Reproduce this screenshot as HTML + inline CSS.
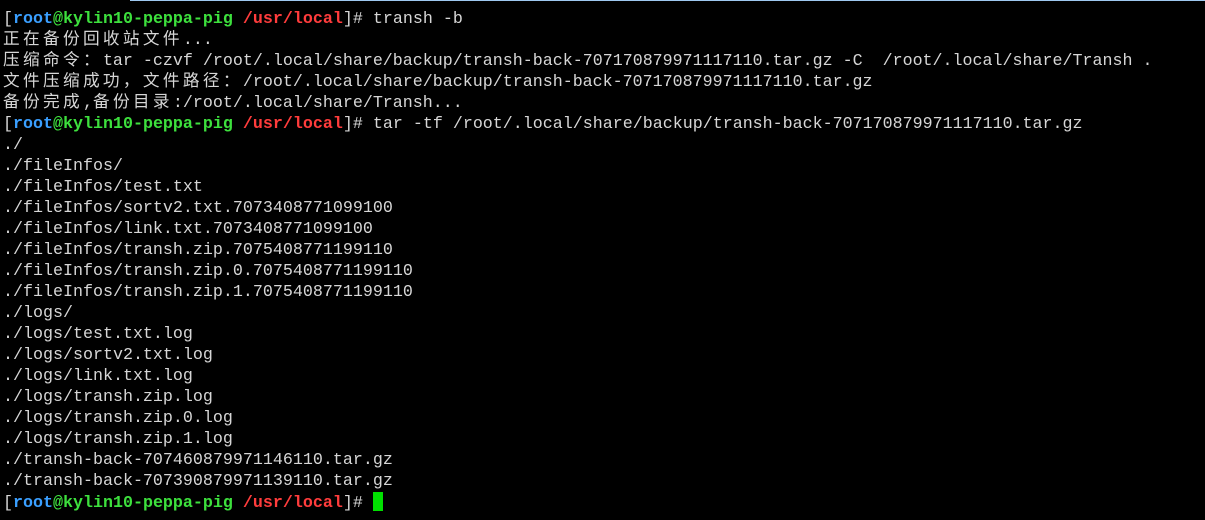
<!DOCTYPE html>
<html><head><meta charset="utf-8"><style>
html,body{margin:0;padding:0;background:#000;width:1205px;height:520px;overflow:hidden}
#t{position:absolute;left:3px;top:9px;font-family:"Liberation Mono",monospace;font-size:16.67px;color:#d6d6d6}
#t div{height:21px;line-height:21px;overflow:visible;white-space:pre}
.c{letter-spacing:3.33px;font-family:"Noto Sans CJK SC",sans-serif;line-height:1px}
.b{color:#3a9fff;font-weight:bold}.g{color:#3de03d;font-weight:bold}.r{color:#ff3c3c;font-weight:bold}
.cur{display:inline-block;width:10px;height:19px;background:#00e000;vertical-align:-4px}
#bar{position:absolute;left:130px;top:0;width:1075px;height:1px;background:#9ec8f0}
</style></head><body><div id="bar"></div>
<div id="t"><div>[<span class="b">root</span><span class="g">@kylin10-peppa-pig</span> <span class="r">/usr/local</span>]# transh -b</div><div><span class="c">正在备份回收站文件</span>...</div><div><span class="c">压缩命令：</span>tar -czvf /root/.local/share/backup/transh-back-707170879971117110.tar.gz -C  /root/.local/share/Transh .</div><div><span class="c">文件压缩成功，文件路径：</span>/root/.local/share/backup/transh-back-707170879971117110.tar.gz</div><div><span class="c">备份完成</span>,<span class="c">备份目录</span>:/root/.local/share/Transh...</div><div>[<span class="b">root</span><span class="g">@kylin10-peppa-pig</span> <span class="r">/usr/local</span>]# tar -tf /root/.local/share/backup/transh-back-707170879971117110.tar.gz</div><div>./</div><div>./fileInfos/</div><div>./fileInfos/test.txt</div><div>./fileInfos/sortv2.txt.7073408771099100</div><div>./fileInfos/link.txt.7073408771099100</div><div>./fileInfos/transh.zip.7075408771199110</div><div>./fileInfos/transh.zip.0.7075408771199110</div><div>./fileInfos/transh.zip.1.7075408771199110</div><div>./logs/</div><div>./logs/test.txt.log</div><div>./logs/sortv2.txt.log</div><div>./logs/link.txt.log</div><div>./logs/transh.zip.log</div><div>./logs/transh.zip.0.log</div><div>./logs/transh.zip.1.log</div><div>./transh-back-707460879971146110.tar.gz</div><div>./transh-back-707390879971139110.tar.gz</div><div>[<span class="b">root</span><span class="g">@kylin10-peppa-pig</span> <span class="r">/usr/local</span>]# <span class="cur"></span></div></div>
</body></html>
